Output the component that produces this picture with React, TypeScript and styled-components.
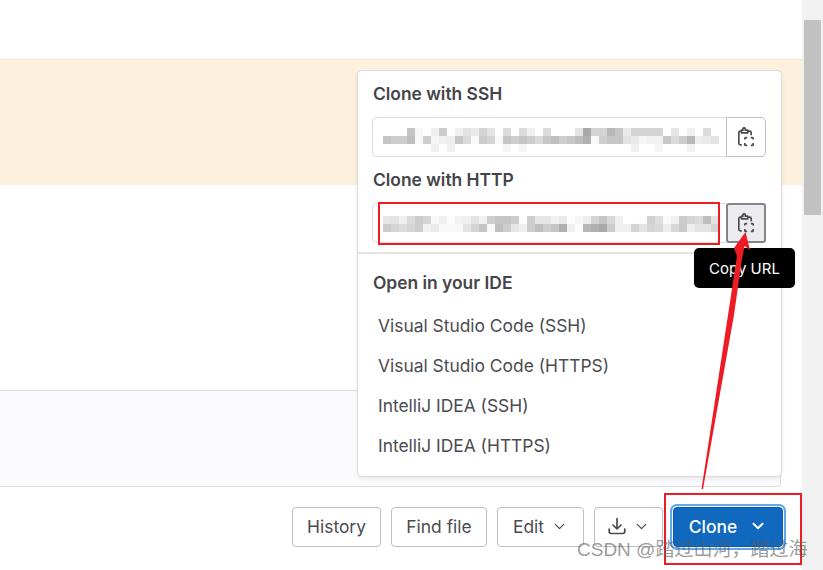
import styled, { createGlobalStyle } from 'styled-components'
import { ChevronDown } from 'lucide-react'

const GlobalStyle = createGlobalStyle`
  html, body {
    margin: 0;
    height: 100%;
    overflow: hidden;
    background: #fff;
  }
  * {
    box-sizing: border-box;
  }
  body {
    font-family: Inter, "Noto Sans", "Liberation Sans", sans-serif;
    color: #333238;
  }
`

const Page = styled.div`
  display: flex;
  width: 823px;
  height: 570px;
  position: relative;
  overflow: hidden;
`

const Main = styled.main`
  flex: 1;
  display: flex;
  flex-direction: column;
  padding-top: 59px;
  position: relative;
`

const Scrollbar = styled.div`
  width: 21px;
  background: #f1f1f1;
  padding: 20px 2px 0 2px;
`

const ScrollThumb = styled.div`
  height: 195px;
  background: #c1c1c1;
`

const Banner = styled.div`
  height: 126px;
  background: #fdf1dd;
  border-top: 1px solid #f5e6cd;
`

const Panel = styled.div`
  margin: 205px 21px 0 0;
  height: 97px;
  background: #fbfafd;
  border: 1px solid #dcdcde;
  border-left: 0;
  border-radius: 0 4px 4px 0;
`

const Toolbar = styled.div`
  display: flex;
  justify-content: flex-end;
  gap: 10px;
  margin-top: 20px;
  padding-right: 19px;
`

const Button = styled.button<{ $width: number }>`
  display: flex;
  align-items: center;
  justify-content: center;
  gap: 7px;
  width: ${({ $width }) => $width}px;
  height: 40px;
  padding: 0 0 2px;
  background: #fff;
  border: 1px solid #bfbfc3;
  border-radius: 4px;
  color: #4c4b51;
  font: 400 17.4px Inter, "Liberation Sans", sans-serif;
`

const CloneButton = styled(Button)`
  gap: 12px;
  background: #1068bf;
  border: 1px solid #0b5cad;
  color: #fff;
  font-weight: 500;
  box-shadow: 0 0 0 1px #fff, 0 0 0 3px #63a6e9;
`

const Dropdown = styled.div`
  position: absolute;
  left: 357px;
  top: 70px;
  width: 425px;
  height: 407px;
  background: #fff;
  border: 1px solid #dcdcde;
  border-radius: 5px;
  box-shadow: 0 2px 4px rgba(0, 0, 0, 0.08);
  display: flex;
  flex-direction: column;
`

const CloneSection = styled.section`
  padding: 13px 15px 0 14px;
  height: 183px;
  border-bottom: 2px solid #e4e4e6;
`

const SectionTitle = styled.h4`
  margin: 0;
  font-size: 17.4px;
  line-height: 20px;
  font-weight: 600;
  color: #45444a;
  padding-left: 1px;
`

const UrlGroup = styled.div`
  display: flex;
  height: 40px;
  margin: 13px 0 13px;
`

const UrlField = styled.div`
  width: 354px;
  background: #fff;
  border: 1px solid #dcdcde;
  border-right: 0;
  border-radius: 5px 0 0 5px;
  padding-left: 10px;
  overflow: hidden;
`

const CopyButton = styled.button<{ $active?: boolean }>`
  width: 40px;
  height: 40px;
  padding: 0;
  display: flex;
  align-items: center;
  justify-content: center;
  background: ${({ $active }) => ($active ? '#ececef' : '#fff')};
  border: ${({ $active }) => ($active ? '2px solid #85848a' : '1px solid #bfbfc3')};
  border-radius: ${({ $active }) => ($active ? '3px' : '0 5px 5px 0')};
  color: #4c4b51;
`

const Mosaic = styled.div<{ $top: number }>`
  margin-top: ${({ $top }) => $top}px;
  filter: blur(0.6px);
  opacity: 0.9;
`

const MosaicRow = styled.div`
  display: flex;
  height: 8px;
`

const MosaicCell = styled.span`
  display: block;
  width: 8px;
  height: 8px;
  flex: none;
`

const IdeSection = styled.section`
  padding: 19px 14px 0;
`

const IdeList = styled.ul`
  list-style: none;
  margin: 12px 0 0;
  padding: 0;
`

const IdeItem = styled.li`
  height: 40px;
  display: flex;
  align-items: center;
  padding-left: 6px;
  font-size: 17.4px;
  color: #4c4b51;
`

const Tooltip = styled.div`
  position: absolute;
  left: 694px;
  top: 248px;
  width: 101px;
  height: 40px;
  background: #000;
  border-radius: 5px;
  color: #fff;
  font-size: 15px;
  display: flex;
  align-items: center;
  justify-content: center;
`

const RedFrame = styled.div<{ $x: number; $y: number; $w: number; $h: number }>`
  position: absolute;
  left: ${({ $x }) => $x}px;
  top: ${({ $y }) => $y}px;
  width: ${({ $w }) => $w}px;
  height: ${({ $h }) => $h}px;
  border: 2px solid #ed1c24;
`

const ArrowOverlay = styled.svg`
  position: absolute;
  left: 0;
  top: 0;
  pointer-events: none;
`

const Watermark = styled.div`
  position: absolute;
  left: 577px;
  top: 538px;
  font: 400 19px "Liberation Sans", "Noto Sans CJK SC", sans-serif;
  line-height: 24px;
  color: rgba(90, 90, 90, 0.62);
  white-space: nowrap;
`

const sshRows = [
  'ff ff ff c0 f8 ff ee c8 ff ee e0 e8 d0 e0 ff d8 ff d8 ee ff d8 ff ff ff e0 a0 d0 d0 b0 c0 e8 d0 d0 d0 d0 ff e4 ff ee ff d8 ff',
  'c0 c8 c8 b8 f8 c8 f5 ee ec c0 d8 fa c8 d0 f8 c0 c8 c0 c8 d8 c0 b8 c8 c0 b8 a8 f8 c8 c0 c0 e0 e8 f5 f0 f0 c0 d8 c8 b0 ec e8 e0',
  'ff ff ff ff ff ff ee ff ee ff ff ff ff ff ff f4 ff f4 ff ff ff ff ff ff ff ff ff ff ff ff ff ee ff ff f4 ff ff ff f0 ff ff ff',
]

const httpRows = [
  'e4 e0 ee d8 c8 d0 f8 f0 fc f0 ee e0 f0 c8 c0 c0 c8 fc c8 e4 e4 f0 e8 fc f4 ec d0 c0 d4 ee ff ff fc cc dc fa f0 c8 d0 d8 b8 e0',
  'c8 d0 d8 d0 c8 f0 e8 f8 f8 f8 e0 d0 c0 f8 b8 c8 e4 ee c8 b8 c8 c0 a8 f0 fc b0 a8 a0 c8 ee ee d0 e0 d0 d4 ec d4 c4 ec e0 e0 d0',
]

const pixelate = (rows: string[], top: number) => (
  <Mosaic $top={top}>
    {rows.map((row, y) => (
      <MosaicRow key={y}>
        {row.split(' ').map((shade, x) => (
          <MosaicCell key={x} style={{ background: `#${shade}${shade}${shade}` }} />
        ))}
      </MosaicRow>
    ))}
  </Mosaic>
)

const ClipboardIcon = () => (
  <svg width="16" height="20" viewBox="0 0 16 20" fill="none" stroke="currentColor" strokeWidth="1.7">
    <path d="M3.5 4.2H2.4A1.6 1.6 0 0 0 .8 5.8v10.4a1.6 1.6 0 0 0 1.6 1.6h1.4" />
    <path d="M9.8 4.2h1.8a1.6 1.6 0 0 1 1.6 1.6v2.4" />
    <path d="M3.5 5.8V3.2h1.4V2a1.2 1.2 0 0 1 2.4 0v1.2h2.5v2.6z" strokeLinejoin="round" />
    <path d="M6.8 12.6v-1a1 1 0 0 1 1-1h1.4M12.8 10.6h1.4a1 1 0 0 1 1 1v1M15.2 16v1.4a1 1 0 0 1-1 1h-1.4M9.2 18.4H7.8a1 1 0 0 1-1-1V16" />
  </svg>
)

const DownloadIcon = () => (
  <svg width="18" height="18" viewBox="0 0 18 18" fill="none" stroke="currentColor" strokeWidth="1.7" strokeLinecap="round" strokeLinejoin="round">
    <path d="M9 1.5v10M5 8l4 4 4-4" />
    <path d="M1.2 12v2.6a1.9 1.9 0 0 0 1.9 1.9h11.8a1.9 1.9 0 0 0 1.9-1.9V12" />
  </svg>
)

const ideOptions = [
  'Visual Studio Code (SSH)',
  'Visual Studio Code (HTTPS)',
  'IntelliJ IDEA (SSH)',
  'IntelliJ IDEA (HTTPS)',
]

const App = () => (
  <Page>
    <GlobalStyle />
    <Main>
      <Banner />
      <Panel />
      <Toolbar>
        <Button $width={89}>History</Button>
        <Button $width={96}>Find file</Button>
        <Button $width={87}>
          Edit <ChevronDown size={17} strokeWidth={1.8} />
        </Button>
        <Button $width={69}>
          <DownloadIcon /> <ChevronDown size={17} strokeWidth={1.8} />
        </Button>
        <CloneButton $width={110}>
          Clone <ChevronDown size={18} strokeWidth={2.6} />
        </CloneButton>
      </Toolbar>
      <Dropdown>
        <CloneSection>
          <SectionTitle>Clone with SSH</SectionTitle>
          <UrlGroup>
            <UrlField>{pixelate(sshRows, 10)}</UrlField>
            <CopyButton>
              <ClipboardIcon />
            </CopyButton>
          </UrlGroup>
          <SectionTitle>Clone with HTTP</SectionTitle>
          <UrlGroup>
            <UrlField>{pixelate(httpRows, 12)}</UrlField>
            <CopyButton $active>
              <ClipboardIcon />
            </CopyButton>
          </UrlGroup>
        </CloneSection>
        <IdeSection>
          <SectionTitle>Open in your IDE</SectionTitle>
          <IdeList>
            {ideOptions.map((option) => (
              <IdeItem key={option}>{option}</IdeItem>
            ))}
          </IdeList>
        </IdeSection>
      </Dropdown>
    </Main>
    <Scrollbar>
      <ScrollThumb />
    </Scrollbar>
    <Tooltip>Copy URL</Tooltip>
    <RedFrame $x={378} $y={202} $w={342} $h={43} />
    <RedFrame $x={664} $y={493} $w={138} $h={72} />
    <ArrowOverlay width="823" height="570" viewBox="0 0 823 570">
      <path d="M701.5 489L728 315L737 256L734 248L745.5 232L750 250L744.5 246L741.5 262L734 315L703 489Z" fill="#ed1c24" />
    </ArrowOverlay>
    <Watermark>CSDN @踏过山河，踏过海</Watermark>
  </Page>
)

export default App
